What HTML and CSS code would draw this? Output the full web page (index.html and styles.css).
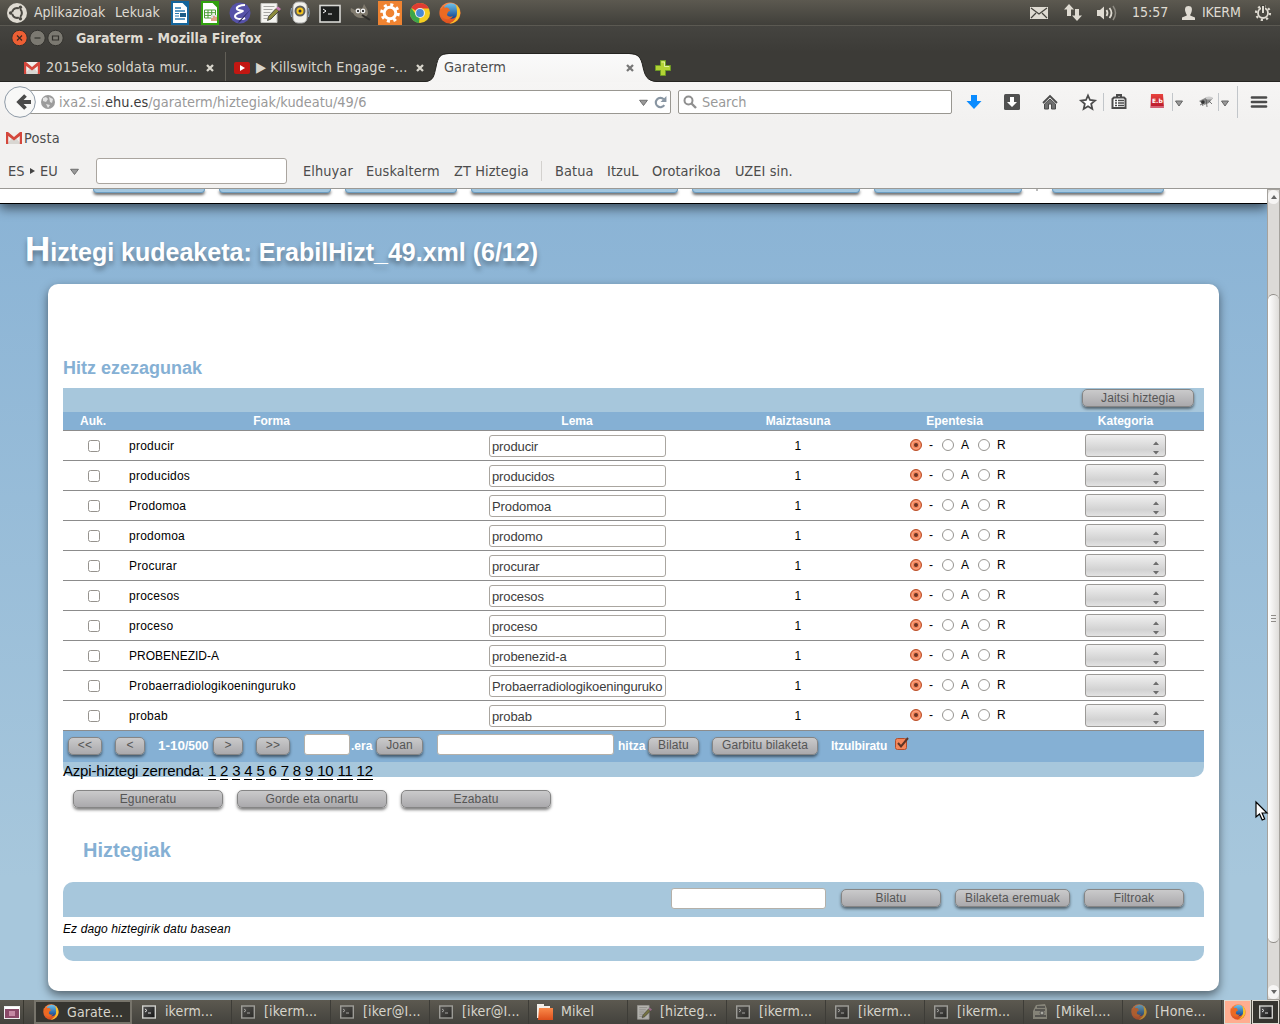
FILE: index.html
```html
<!DOCTYPE html>
<html lang="eu">
<head>
<meta charset="utf-8">
<title>Garaterm</title>
<link rel="stylesheet" href="styles.css">
</head>
<body>
<svg class="defs" width="0" height="0" aria-hidden="true">
  <defs>
    <linearGradient id="g-orange" x1="0" y1="0" x2="0" y2="1"><stop offset="0" stop-color="#fa8a4a"/><stop offset="1" stop-color="#dd4f1c"/></linearGradient>
    <linearGradient id="g-blue" x1="0" y1="0" x2="0" y2="1"><stop offset="0" stop-color="#6ec3ec"/><stop offset="1" stop-color="#12418c"/></linearGradient>
    <linearGradient id="g-term" x1="0" y1="0" x2="1" y2="1"><stop offset="0" stop-color="#555"/><stop offset="1" stop-color="#111"/></linearGradient>
    <linearGradient id="g-red" x1="0" y1="0" x2="0" y2="1"><stop offset="0" stop-color="#e8443e"/><stop offset="1" stop-color="#b5152b"/></linearGradient>
    <linearGradient id="g-tab" x1="0" y1="0" x2="0" y2="1"><stop offset="0" stop-color="#fafafa"/><stop offset="1" stop-color="#f5f4f3"/></linearGradient>
    <symbol id="firefox" viewBox="0 0 22 22"><circle cx="11" cy="11" r="10.6" fill="url(#g-orange)"/><circle cx="12" cy="9" r="7.8" fill="url(#g-blue)"/><path d="M17 2.500c4 3 5.500 9 3 13-2 4-6 6-9.500 6 7-3 9-8 6.500-19z" fill="#f8c32c"/><path d="M1 6l2 1 1-3 2 2c2-1 4 0 4 1.500 2 .5 1 2-1 2.200 0 1.300-1 1.800-1 3 1 2.300 4 2.300 6 1.300-2 3.500-6 4-8.500 2.500C2 16 .5 11 1 6z" fill="#ec6a22"/></symbol>
    <symbol id="term" viewBox="0 0 16 16"><rect x="1.700" y="2" width="12.600" height="12" fill="url(#g-term)" stroke="#d0d0cc" stroke-width="1.400"/><path d="M4 5l2 1.500L4 8M7 9h3" stroke="#ddd" fill="none"/></symbol>
    <symbol id="gmail" viewBox="0 0 16 12"><path d="M1 0h14v12H1z" fill="#f0efec"/><path d="M1 12l5-6 2 1.500L10 6l5 6z" fill="#d8d6d2"/><path d="M0 12V0h2l6 5 6-5h2v12h-2.200V4L8 8.500 2.200 4v8z" fill="#d4473c"/></symbol>
    <symbol id="close" viewBox="0 0 8 8"><path d="M1 1l6 6M7 1L1 7" stroke="currentColor" stroke-width="2.300"/></symbol>
    <symbol id="down" viewBox="0 0 8 6"><path d="M.5 1h7L4 5.700z" fill="#999" stroke="#666" stroke-width=".8"/></symbol>
    <symbol id="notes" viewBox="0 0 22 22"><path d="M2 2h16v19H2z" fill="#f4f4f0" stroke="#c4c4c0"/><path d="M4.500 5h11M4.500 8h9M4.500 11h7M4.500 14h5M4.500 17h4" stroke="#a5a5a2"/><path d="M17 7l3 2.500-8 8-3.500 1.500 1-4z" fill="#8b8a3c" stroke="#333" stroke-width=".8"/><path d="M17 7l2-2 3 2.500-2 2z" fill="#c77bb0"/></symbol>
    <symbol id="radio-on" viewBox="0 0 12 12"><circle cx="6" cy="6" r="5.500" fill="#f38459" stroke="#b9502b"/><circle cx="6" cy="6" r="3.900" fill="none" stroke="#f9a583"/><circle cx="6" cy="6" r="2" fill="#6b3323"/></symbol>
    <symbol id="radio-off" viewBox="0 0 12 12"><circle cx="6" cy="6" r="5.500" fill="#fff" stroke="#969490"/></symbol>
    <symbol id="updown" viewBox="0 0 8 14"><path d="M1 4l3-3.500L7 4zM1 10h6l-3 3.500z" fill="#6e6e6e"/></symbol>
  </defs>
</svg>

<header class="panel">
  <svg class="ubuntu" viewBox="0 0 20 20"><circle cx="10" cy="10" r="10" fill="#dfdbd2"/><circle cx="10" cy="10" r="4.800" fill="none" stroke="#4a4842" stroke-width="2.200"/><path d="M10 10L3 10M10 10l3.800-6.500M10 10l3.800 6.500" stroke="#dfdbd2" stroke-width="1.300"/><circle cx="10" cy="10" r="3.400" fill="#dfdbd2"/><circle cx="3.600" cy="10" r="1.700" fill="#4a4842"/><circle cx="13.400" cy="4.300" r="1.700" fill="#4a4842"/><circle cx="13.400" cy="15.700" r="1.700" fill="#4a4842"/></svg>
  <span class="menu-apps">Aplikazioak</span><span class="menu-places">Lekuak</span>
  <div class="launchers">
    <svg viewBox="0 0 24 24"><path d="M4 1h11l5 5v17H4z" fill="#fff" stroke="#14659c" stroke-width="2"/><path d="M14 0h7v7z" fill="#14659c"/><path d="M7 7h6M7 10h10M7 18h10" stroke="#2a7ab0" stroke-width="1.500"/><path d="M7 12.500h4M7 15h4" stroke="#2a7ab0"/><path d="M12 12h6v4h-6z" fill="#1c5c88"/></svg>
    <svg viewBox="0 0 24 24"><path d="M4 1h11l5 5v17H4z" fill="#fff" stroke="#31a00f" stroke-width="2"/><path d="M14 0h7v7z" fill="#31a00f"/><path d="M6.500 9h11v8h-11zM6.500 11.700h11M6.500 14.400h11M10 9v8M13.700 9v8" fill="none" stroke="#4a9c35"/><path d="M13 14h6v6h-6z" fill="#ddd"/><path d="M14 20v-3M16 20v-5M18 20v-4" stroke="#df6930"/></svg>
    <svg viewBox="0 0 24 24"><circle cx="12" cy="12" r="10.500" fill="#5652a8"/><path d="M17 4c-5 0-9 2-8 4s6 1 6 2-8 2-8 5 6 4 10 2" fill="none" stroke="#fff" stroke-width="2"/><path d="M23 8L12 21l-2 1 1-2z" fill="#29265b"/></svg>
    <svg viewBox="-1 0 24 24"><use href="#notes" width="22" height="23"/></svg>
    <svg viewBox="0 0 24 24"><rect x="5" y="1" width="14" height="21" rx="5" fill="#f1f1ed" stroke="#aaa"/><circle cx="12" cy="10" r="5.500" fill="#5c5e5d"/><circle cx="12" cy="10" r="3.500" fill="#f4c41d"/><circle cx="12" cy="10" r="1.500" fill="#333"/><path d="M3.500 7q-1.500 5 0 9M20.500 7q1.500 5 0 9" fill="none" stroke="#8ea9c7"/></svg>
    <svg viewBox="0 0 24 24"><rect x="2" y="4.500" width="20" height="16.500" fill="#1d1f1e" stroke="#d8d8d4" stroke-width="1.600"/><path d="M5 8l3 2-3 2M10 13h4" stroke="#fff" fill="none"/></svg>
    <svg viewBox="0 0 24 24"><path d="M3 7l4 2q3-4 7-1l2-5 3 5c2 4 1 8-5 9-4 0-7-1-9-5-2 0-3-3-2-5z" fill="#817b6e"/><circle cx="10" cy="10" r="2.400" fill="#eee"/><circle cx="15" cy="10" r="2.400" fill="#eee"/><circle cx="10" cy="10" r="1"/><circle cx="15" cy="10" r="1"/><path d="M14 14l8 5" stroke="#2e2d2a" stroke-width="2"/></svg>
    <svg viewBox="0 0 24 24"><path d="M0 0h24v24H0z" fill="#ef8331"/><circle cx="12" cy="12" r="5.800" fill="none" stroke="#fff" stroke-width="3"/><circle cx="12" cy="12" r="8.300" fill="none" stroke="#fff" stroke-width="3" stroke-dasharray="3 3.519"/></svg>
    <svg viewBox="0 0 24 24"><circle cx="12" cy="12" r="10" fill="#f4ce22"/><path d="M12 12L3.300 7A10 10 0 0 1 21 7.500H12z" fill="#df3c33"/><path d="M12 12L11 22A10 10 0 0 1 3.300 7l5 7z" fill="#3da64b"/><circle cx="12" cy="12" r="5" fill="#eee"/><circle cx="12" cy="12" r="3.900" fill="#4789d5"/></svg>
    <svg viewBox="-1 -1 24 24"><use href="#firefox" width="22" height="22"/></svg>
  </div>
  <div class="tray">
    <svg class="t-mail" viewBox="0 0 18 12"><path d="M0 0h18v12H0z" fill="#dfdbd2"/><path d="M1 1l8 6 8-6M1 11l5-5M17 11l-5-5" fill="none" stroke="#45443e" stroke-width="1.200"/></svg>
    <svg class="t-net" viewBox="0 0 18 17"><path d="M5 0l5 5.500H7V12H3V5.500H0zM13 17l5-5.500h-3V5h-4v6.500H8z" fill="#dfdbd2"/></svg>
    <svg class="t-vol" viewBox="0 0 20 16"><path d="M0 5h3l4-3.500v13L3 11H0z" fill="#dfdbd2"/><path d="M9.500 5q2 3 0 6M12.500 3q4 5 0 10" fill="none" stroke="#dfdbd2" stroke-width="1.800"/><path d="M16 1q5 7 0 14" fill="none" stroke="#8d8a82" stroke-width="1.500"/></svg>
    <span class="clock">15:57</span>
    <svg class="t-user" viewBox="0 0 13 14"><path d="M6.500 0C10 0 10.500 3 9.500 6 9 8 8 8.500 8.200 9.500L13 11.500V14H0v-2.500l4.800-2C5 8.500 4 8 3.500 6 2.500 3 3 0 6.500 0z" fill="#dfdbd2"/></svg>
    <span class="user">IKERM</span>
    <svg class="t-gear" viewBox="0 0 16 16"><circle cx="8" cy="8" r="5" fill="none" stroke="#dfdbd2" stroke-width="1.800"/><circle cx="8" cy="8" r="7" fill="none" stroke="#dfdbd2" stroke-width="2.200" stroke-dasharray="2.200 3.298"/><path d="M8 0v8" stroke="#45443e" stroke-width="4"/><path d="M8 1v7" stroke="#dfdbd2" stroke-width="2"/></svg>
  </div>
</header>

<div class="titlebar">
  <svg class="winbtns" viewBox="0 0 54 18"><circle cx="8.500" cy="9" r="7.700" fill="#ed5f34" stroke="#33322e"/><path d="M6 6.500l5 5M11 6.500l-5 5" stroke="#3d2a22" stroke-width="1.200"/><circle cx="26.500" cy="9" r="7.700" fill="#7b7971" stroke="#33322e"/><path d="M23.500 9h6" stroke="#32312d" stroke-width="1.200"/><circle cx="44.500" cy="9" r="7.700" fill="#7b7971" stroke="#33322e"/><path d="M41.500 7h6v4h-6z" fill="none" stroke="#32312d" stroke-width="1.200"/></svg>
  <b>Garaterm - Mozilla Firefox</b>
</div>

<nav class="tabs">
  <div class="tab"><svg class="fav gm"><use href="#gmail"/></svg><span>2015eko soldata mur...</span><svg class="x"><use href="#close"/></svg></div>
  <div class="tab second"><svg class="fav" viewBox="0 0 16 12"><rect width="16" height="12" rx="2" fill="#c31712"/><path d="M6 3l5 3-5 3z" fill="#fff"/></svg><span>▶ Killswitch Engage -...</span><svg class="x"><use href="#close"/></svg></div>
  <div class="tab active"><svg class="shape" viewBox="0 0 232 29"><path d="M0 29C9 28 9 22 11 14 13 4 15 1 24 1H204C213 1 216 4 218 14 220 23 222 28 232 29z" fill="url(#g-tab)"/><path d="M0 28.500C9 28 9 22 11 14 13 4 15 .5 24 .5H204C213 .5 216 4 218 14 220 23 222 28 232 28.500" fill="none" stroke="#252421"/></svg><span>Garaterm</span><svg class="x"><use href="#close"/></svg></div>
  <svg class="plus" viewBox="0 0 16 16"><path d="M5.500.5h5v5h5v5h-5v5h-5v-5h-5v-5h5z" fill="#b3d335" stroke="#6e9a24"/><path d="M6.500 2h3v4.500H14" fill="none" stroke="#e3f1a0"/></svg>
</nav>

<div class="navbar">
  <svg class="back" viewBox="0 0 32 32"><circle cx="16" cy="16" r="15.300" fill="#f8f8f7" stroke="#8e9aa7"/><path d="M27 16H15M21.500 9.500L15 16l6.500 6.500" fill="none" stroke="#4a4a4a" stroke-width="3.800"/></svg>
  <div class="urlbar">
    <svg class="globe" viewBox="0 0 14 14"><circle cx="7" cy="7" r="7" fill="#9c9c9c"/><path d="M2 3l3-1 2 2-2 3-3-1zM8 2l4 2-1 4-2-1zM5 9l4 1-2 3z" fill="#e4e4e4"/></svg>
    <span class="url">ixa2.si.<em>ehu.es</em>/garaterm/hiztegiak/kudeatu/49/6</span>
    <svg class="dd"><use href="#down"/></svg>
    <svg class="reload" viewBox="0 0 12 12"><path d="M9.500 8.500a4.300 4.300 0 1 1-.5-5.500" fill="none" stroke="#8895a2" stroke-width="2"/><path d="M11.500 0v5.500H6z" fill="#8895a2"/></svg>
  </div>
  <div class="search"><svg viewBox="0 0 14 14"><circle cx="5.500" cy="5.500" r="4" fill="none" stroke="#8f8f8f" stroke-width="2"/><path d="M8.500 8.500l4.500 4.500" stroke="#8f8f8f" stroke-width="2.400"/></svg><span>Search</span></div>
  <svg class="tools" viewBox="960 82 320 40">
    <path d="M971 95h6v6h4.500l-7.500 8-7.500-8h4.500z" fill="#0a8bff"/>
    <rect x="1004" y="94" width="16" height="16" rx="1.500" fill="#505050"/><path d="M1010 97h4v5h3l-5 5-5-5h3z" fill="#fff"/>
    <path d="M1043 103l7-7 7 7" fill="none" stroke="#4b4b4b" stroke-width="1.800"/><path d="M1050 99l5.500 5v5h-4v-5h-3v5h-4v-5z" fill="#707070" stroke="#4b4b4b"/>
    <path d="M1088 95.500l2 4.500 5 .6-3.800 3.300 1.100 5-4.300-2.600-4.300 2.600 1.100-5-3.800-3.300 5-.6z" fill="#fff" stroke="#4b4b4b" stroke-width="1.800"/>
    <path d="M1103.500 93v18M1172.500 93v18M1218.500 93v18M1237.500 86v32" stroke="#c2c6ca"/>
    <path d="M1114 97.500h10l1.500 1.500v9h-13v-9zM1117 97v-2h4v2" fill="#fff" stroke="#4b4b4b" stroke-width="2"/><path d="M1115 100.500h2M1118 100.500h6M1115 103h2M1118 103h6M1115 105.500h2M1118 105.500h6" stroke="#4b4b4b" stroke-width="1.300"/>
    <path d="M1151 94h12l1 14h-13.500z" fill="url(#g-red)"/><path d="M1151 107h13" stroke="#eab"/><text x="1152" y="103" class="eb">E.b</text>
    <path d="M1175.500 101h7l-3.500 5zM1221.500 101h7l-3.500 5z" fill="#999" stroke="#666"/>
    <path d="M1199 101l8-4 6 1-4 5-5 2z" fill="#888"/><path d="M1201 101l2 5M1206 98l1 9M1209 101l3 3M1200 105l4-2" stroke="#555" stroke-width=".8"/><ellipse cx="1209" cy="98" rx="3.500" ry="1.500" fill="#ccc"/><circle cx="1203" cy="102" r="1.700" fill="#333"/>
    <path d="M1252 97.500h14M1252 102h14M1252 106.500h14" stroke="#4b4b4b" stroke-width="2.700" stroke-linecap="round"/>
  </svg>
</div>
<div class="bookmarks"><svg><use href="#gmail"/></svg><span>Posta</span></div>
<div class="dictbar">
  <span class="lang">ES</span><svg class="tri" viewBox="0 0 5 6"><path d="M0 0l5 3-5 3z" fill="#444"/></svg><span class="eu">EU</span>
  <svg class="dd"><use href="#down"/></svg><i class="dictinput"></i>
  <span class="d1">Elhuyar</span><span class="d2">Euskalterm</span><span class="d3">ZT Hiztegia</span><i class="vsep"></i><span class="d4">Batua</span><span class="d5">ItzuL</span><span class="d6">Orotarikoa</span><span class="d7">UZEI sin.</span>
</div>

<div class="viewport">
<main class="page">
  <div class="sitenav"><i class="w112"></i><i class="w112"></i><i class="w112"></i><i class="w207"></i><i class="w168"></i><i class="w148"></i><b class="dot"></b><i class="w112"></i></div>
  <h1>Hiztegi kudeaketa: ErabilHizt_49.xml (6/12)</h1>
  <section class="card">
    <h3>Hitz ezezagunak</h3>
    <div class="strip top"><button class="btn jaitsi">Jaitsi hiztegia</button></div>
    <div class="row head"><b>Auk.</b><b>Forma</b><b>Lema</b><b>Maiztasuna</b><b>Epentesia</b><b>Kategoria</b></div>
    <div class="row"><i class="cb"></i><span>producir</span><div class="lema">producir</div><span class="n">1</span><div class="ep"><svg><use href="#radio-on"/></svg><span>-</span><svg><use href="#radio-off"/></svg><span class="a">A</span><svg><use href="#radio-off"/></svg><span>R</span></div><div class="sel"><svg><use href="#updown"/></svg></div></div>
    <div class="row"><i class="cb"></i><span>producidos</span><div class="lema">producidos</div><span class="n">1</span><div class="ep"><svg><use href="#radio-on"/></svg><span>-</span><svg><use href="#radio-off"/></svg><span class="a">A</span><svg><use href="#radio-off"/></svg><span>R</span></div><div class="sel"><svg><use href="#updown"/></svg></div></div>
    <div class="row"><i class="cb"></i><span>Prodomoa</span><div class="lema">Prodomoa</div><span class="n">1</span><div class="ep"><svg><use href="#radio-on"/></svg><span>-</span><svg><use href="#radio-off"/></svg><span class="a">A</span><svg><use href="#radio-off"/></svg><span>R</span></div><div class="sel"><svg><use href="#updown"/></svg></div></div>
    <div class="row"><i class="cb"></i><span>prodomoa</span><div class="lema">prodomo</div><span class="n">1</span><div class="ep"><svg><use href="#radio-on"/></svg><span>-</span><svg><use href="#radio-off"/></svg><span class="a">A</span><svg><use href="#radio-off"/></svg><span>R</span></div><div class="sel"><svg><use href="#updown"/></svg></div></div>
    <div class="row"><i class="cb"></i><span>Procurar</span><div class="lema">procurar</div><span class="n">1</span><div class="ep"><svg><use href="#radio-on"/></svg><span>-</span><svg><use href="#radio-off"/></svg><span class="a">A</span><svg><use href="#radio-off"/></svg><span>R</span></div><div class="sel"><svg><use href="#updown"/></svg></div></div>
    <div class="row"><i class="cb"></i><span>procesos</span><div class="lema">procesos</div><span class="n">1</span><div class="ep"><svg><use href="#radio-on"/></svg><span>-</span><svg><use href="#radio-off"/></svg><span class="a">A</span><svg><use href="#radio-off"/></svg><span>R</span></div><div class="sel"><svg><use href="#updown"/></svg></div></div>
    <div class="row"><i class="cb"></i><span>proceso</span><div class="lema">proceso</div><span class="n">1</span><div class="ep"><svg><use href="#radio-on"/></svg><span>-</span><svg><use href="#radio-off"/></svg><span class="a">A</span><svg><use href="#radio-off"/></svg><span>R</span></div><div class="sel"><svg><use href="#updown"/></svg></div></div>
    <div class="row"><i class="cb"></i><span class="caps">PROBENEZID-A</span><div class="lema">probenezid-a</div><span class="n">1</span><div class="ep"><svg><use href="#radio-on"/></svg><span>-</span><svg><use href="#radio-off"/></svg><span class="a">A</span><svg><use href="#radio-off"/></svg><span>R</span></div><div class="sel"><svg><use href="#updown"/></svg></div></div>
    <div class="row"><i class="cb"></i><span>Probaerradiologikoeninguruko</span><div class="lema">Probaerradiologikoeninguruko</div><span class="n">1</span><div class="ep"><svg><use href="#radio-on"/></svg><span>-</span><svg><use href="#radio-off"/></svg><span class="a">A</span><svg><use href="#radio-off"/></svg><span>R</span></div><div class="sel"><svg><use href="#updown"/></svg></div></div>
    <div class="row"><i class="cb"></i><span>probab</span><div class="lema">probab</div><span class="n">1</span><div class="ep"><svg><use href="#radio-on"/></svg><span>-</span><svg><use href="#radio-off"/></svg><span class="a">A</span><svg><use href="#radio-off"/></svg><span>R</span></div><div class="sel"><svg><use href="#updown"/></svg></div></div>
    <div class="pager">
      <button class="btn first">&lt;&lt;</button><button class="btn prev">&lt;</button><b class="range"><big>1-10</big>/500</b><button class="btn next">&gt;</button><button class="btn lastpage">&gt;&gt;</button>
      <i class="inp goto"></i><b class="era">.era</b><button class="btn joan">Joan</button><i class="inp word"></i><b class="hitza">hitza</b><button class="btn bil">Bilatu</button><button class="btn garb">Garbitu bilaketa</button><b class="itz">Itzulbiratu</b>
      <svg class="checked" viewBox="0 0 14 14"><rect x=".5" y="1.500" width="11" height="11" rx="2" fill="#f4875b" stroke="#b24d2a"/><path d="M3 6l3 3.500L13 1" fill="none" stroke="#5d3527" stroke-width="2"/></svg>
    </div>
    <div class="strip sublist">Azpi-hiztegi zerrenda: <u>1</u> <u>2</u> <u>3</u> <u>4</u> <u>5</u> 6 <u>7</u> <u>8</u> <u>9</u> <u>10</u> <u>11</u> <u>12</u></div>
    <div class="actions"><button class="btn">Eguneratu</button><button class="btn">Gorde eta onartu</button><button class="btn">Ezabatu</button></div>
    <h2>Hiztegiak</h2>
    <div class="filter"><i class="inp"></i><button class="btn">Bilatu</button><button class="btn wide">Bilaketa eremuak</button><button class="btn">Filtroak</button></div>
    <p class="none">Ez dago hiztegirik datu basean</p>
    <div class="strip end"></div>
  </section>
</main>
<aside class="scrollbar"><i class="up"></i><i class="thumb"></i><i class="dn"></i></aside>
</div>

<footer class="taskbar">
  <div class="desk"><svg viewBox="0 0 16 13"><rect x=".5" y=".5" width="15" height="12" fill="#8a4a68" stroke="#eee"/><path d="M1 2h14" stroke="#fff" stroke-width="2"/><path d="M5 5h6v5H5z" fill="#c58aa4"/></svg></div>
  <div class="task on"><svg><use href="#firefox"/></svg>Garate...</div>
  <div class="task live"><svg><use href="#term"/></svg>ikerm...</div>
  <div class="task"><svg><use href="#term"/></svg>[ikerm...</div>
  <div class="task"><svg><use href="#term"/></svg>[iker@I...</div>
  <div class="task"><svg><use href="#term"/></svg>[iker@I...</div>
  <div class="task live"><svg viewBox="0 0 16 16"><path d="M0 0h7v2h6v12H0z" fill="#f4efe8"/><path d="M2 4h14v12H1z" fill="url(#g-orange)"/></svg>Mikel</div>
  <div class="task"><svg><use href="#notes"/></svg>[hizteg...</div>
  <div class="task"><svg><use href="#term"/></svg>[ikerm...</div>
  <div class="task"><svg><use href="#term"/></svg>[ikerm...</div>
  <div class="task"><svg><use href="#term"/></svg>[ikerm...</div>
  <div class="task"><svg viewBox="0 0 16 16"><path d="M4 1l9-1 2 5v10H1V7z" fill="#a9a799"/><path d="M5 3h8M3 6h10M3 12h11" stroke="#444" stroke-width="1.500"/><circle cx="10" cy="9" r="2" fill="#e8e8e0" stroke="#555"/></svg>[Mikel....</div>
  <div class="task"><svg><use href="#firefox"/></svg>[Hone...</div>
  <div class="ws cur"><svg><use href="#firefox"/></svg></div><div class="ws"><svg><use href="#term"/></svg></div>
</footer>
<svg class="cursor" viewBox="0 0 13 20"><path d="M1 1v15l3.500-3 2.700 6 2.500-1-2.600-6H12z" fill="#fff" stroke="#000" stroke-width="1.200"/></svg>
</body>
</html>
```
FILE: styles.css
```css
* { box-sizing: border-box; }
body { margin: 0; width: 1280px; height: 1024px; overflow: hidden; display: flex; flex-direction: column; font: 14.4px "DejaVu Sans Condensed", "DejaVu Sans", sans-serif; font-stretch: condensed; color: #4c4c4c; white-space: nowrap; position: relative; }
svg { display: block; flex: none; overflow: visible; }
i, button { flex: none; }
.defs { position: absolute; }

.panel { height: 25px; flex: none; display: flex; align-items: center; padding-left: 7px; background: linear-gradient(#5c5950, #403f3a); color: #dfdbd2; font-size: 14px; }
.panel span { line-height: 22px; margin-top: -2px; }
.ubuntu { width: 20px; height: 20px; }
.menu-apps { margin-left: 7px; width: 81px; }
.menu-places { width: 53px; letter-spacing: .1px; }
.launchers { display: flex; gap: 6px; }
.launchers svg { width: 24px; height: 24px; }
.tray { margin-left: auto; display: flex; align-items: center; padding-right: 9px; }
.t-mail { width: 18px; height: 12px; margin-right: 16px; }
.t-net { width: 18px; height: 17px; margin-right: 15px; }
.t-vol { width: 20px; height: 16px; margin-right: 15px; }
.clock { width: 50px; }
.t-user { width: 13px; height: 14px; margin-right: 7px; }
.user { width: 53px; letter-spacing: -.2px; }
.t-gear { width: 16px; height: 16px; }

.titlebar { height: 27px; flex: none; border-top: 1px solid #5b5952; background: linear-gradient(#454440, #3c3b37); display: flex; align-items: center; padding: 0 0 2px 11px; color: #dfdbd2; }
.winbtns { width: 54px; height: 18px; margin-right: 11px; }
.titlebar b { font-size: 14px; line-height: 24px; }

.tabs { height: 30px; flex: none; display: flex; align-items: center; background: #3c3b37; border-bottom: 1px solid #252421; padding-left: 24px; color: #d8d5cc; }
.tab { display: flex; align-items: center; height: 29px; width: 201px; position: relative; }
.tab span { width: 160px; line-height: 26px; letter-spacing: .12px; }
.fav { width: 16px; height: 12px; margin-right: 6px; margin-top: 2px; }
.x { width: 8px; height: 8px; margin-top: 2px; }
.tab.second { border-left: 1px solid #625f57; width: 204px; padding-left: 8px; }
.tab.active { width: 227px; padding-left: 15px; color: #4c4c4c; }
.tab.active span { width: 182px; z-index: 1; letter-spacing: 0; }
.tab.active .x { z-index: 1; color: #777; }
.shape { position: absolute; left: -4px; top: 1px; width: 232px; height: 29px; }
.plus { width: 16px; height: 16px; margin-top: 2px; margin-left: -1px; }

.navbar { height: 40px; flex: none; display: flex; align-items: center; padding-left: 4px; background: linear-gradient(#f6f5f4, #f2f1f0); }
.back { width: 32px; height: 32px; z-index: 1; }
.urlbar { width: 642px; height: 24px; margin-left: -7px; border: 1px solid #999791; border-radius: 2px; background: #fff; display: flex; align-items: center; padding-left: 11px; color: #999; }
.globe { width: 14px; height: 14px; margin-right: 4px; }
.url { width: 580px; }
.url em { font-style: normal; color: #3c3c3c; }
.dd { width: 9px; height: 7px; }
.reload { width: 13px; height: 13px; margin-left: 6px; }
.search { width: 274px; height: 24px; margin-left: 7px; border: 1px solid #999791; border-radius: 2px; background: #fff; display: flex; align-items: center; padding-left: 4px; gap: 5px; color: #999; }
.search svg { width: 14px; height: 14px; }
.tools { width: 320px; height: 40px; margin-left: 8px; }
.eb { font: bold 6px "DejaVu Sans", sans-serif; fill: #fff; }
.bookmarks { height: 32px; flex: none; background: #f2f1f0; display: flex; align-items: center; padding-left: 6px; gap: 2px; letter-spacing: .2px; }
.bookmarks svg { width: 16px; height: 12px; }
.dictbar { height: 35px; flex: none; background: #f2f1f0; border-bottom: 1px solid #9b9995; display: flex; align-items: center; padding-left: 8px; letter-spacing: .1px; }
.lang { width: 22px; }
.tri { width: 5px; height: 6px; }
.eu { margin-left: 5px; width: 30px; }
.dictinput { width: 191px; height: 26px; margin: 0 16px 0 17px; border: 1px solid #aaa59f; border-radius: 3px; background: #fff; }
.d1 { width: 63px; } .d2 { width: 88px; } .d3 { width: 87px; }
.vsep { width: 1px; height: 20px; background: #d3d1ce; margin-right: 13px; }
.d4 { width: 52px; } .d5 { width: 45px; } .d6 { width: 83px; }

.viewport { height: 811px; flex: none; display: flex; font: 12px "Liberation Sans", Arial, sans-serif; color: #000; }
.page { width: 1267px; height: 811px; overflow: hidden; background: linear-gradient(#8ab3d5, #a7c7dc 85%); }
.sitenav { height: 15px; background: #fff; border-bottom: 1px solid #000; box-shadow: 0 4px 12px rgba(0,0,0,.6); display: flex; gap: 14px; padding-left: 93px; }
.sitenav i { height: 4px; background: #a2c6df; border: solid #6c9dc1; border-width: 0 1px 1px; border-radius: 0 0 5px 5px; box-shadow: 0 2px 3px rgba(0,0,0,.6); }
.w112 { width: 112px; } .w207 { width: 207px; } .w168 { width: 168px; } .w148 { width: 148px; }
.dot { width: 2px; height: 2px; background: #bbb; }
h1 { margin: 24px 0 0 25px; height: 56px; font-size: 25px; line-height: 42px; color: #fff; text-shadow: 0 4px 5px rgba(0,0,0,.35); }
h1::first-letter { font-size: 35px; }
.card { margin-left: 48px; width: 1171px; height: 707px; padding: 73px 15px 0; background: #fff; border-radius: 10px; box-shadow: 0 4px 10px rgba(0,0,0,.5); }
h3 { margin: 0; height: 31px; font-size: 18px; line-height: 22px; color: #85b0d4; }
.strip { background: #a7c7dc; }
.top { height: 24px; padding: 1px 10px 0 0; display: flex; justify-content: flex-end; }
.btn { height: 18px; padding: 0; border: 1px solid #858585; border-radius: 5px; background: linear-gradient(#cacacb, #aaa9ac); box-shadow: 0 2px 3px rgba(0,0,0,.5); color: #555; font: 12px/15px "Liberation Sans", Arial, sans-serif; letter-spacing: .13px; }
.jaitsi { width: 112px; }
.row { height: 30px; border-bottom: 1px solid #8c8c8c; display: grid; grid-template-columns: 60px 297px 314px 128px 185px 157px; align-items: center; }
.row.head { height: 19px; background: #85b0d4; color: #fff; text-align: center; line-height: 18px; }
.row > span { padding-left: 6px; letter-spacing: .24px; }
.row > .caps { letter-spacing: 0; }
.row > .n { padding: 0; text-align: center; }
.cb { width: 12px; height: 12px; border: 1px solid #96938e; border-radius: 2.500px; margin: 1px 0 0 25px; }
.lema { width: 177px; height: 22px; margin: 1px 0 0 69px; border: 1px solid #aaa6a0; border-radius: 3px; padding-left: 2px; font-size: 13px; letter-spacing: -.11px; line-height: 22px; color: #3c3c3c; }
.ep { display: flex; align-items: center; padding-left: 48px; margin-top: -1px; }
.ep svg { width: 12px; height: 12px; }
.ep span { width: 20px; padding-left: 7px; }
.ep .a { width: 24px; }
.sel { width: 81px; height: 23px; margin-left: 38px; border: 1px solid #9c9a97; border-radius: 3px; background: linear-gradient(#f0f0f0, #d2d2d2 70%, #e2e2e2); display: flex; justify-content: flex-end; padding: 6px 5px 0 0; }
.sel svg { width: 8px; height: 14px; }
.pager { height: 31px; background: #85b0d4; display: flex; align-items: center; padding: 0 0 2px 5px; color: #fff; }
.inp { border: 1px solid #b4b0a9; border-radius: 3px; background: #fff; height: 21px; }
.pager .inp { margin-top: -2px; }
.first { width: 34px; margin-right: 13px; }
.prev { width: 30px; margin-right: 13px; }
.range { width: 55px; }
.range big { font-size: 13.500px; }
.next { width: 30px; margin-right: 13px; }
.lastpage { width: 34px; margin-right: 14px; }
.goto { width: 46px; margin-right: 1px; }
.era { width: 25px; }
.joan { width: 47px; margin-right: 14px; }
.word { width: 177px; margin-right: 4px; }
.hitza { width: 30px; }
.bil { width: 51px; margin-right: 13px; }
.garb { width: 106px; margin-right: 13px; }
.itz { width: 64px; letter-spacing: -.1px; }
.checked { width: 14px; height: 14px; margin-top: -4px; }
.sublist { height: 15px; border-radius: 0 0 10px 10px; font-size: 15px; line-height: 18px; letter-spacing: -.19px; margin-bottom: 13px; }
.sublist u { text-decoration: none; border-bottom: 1px solid #000; }
.actions { display: flex; gap: 14px; padding-left: 10px; }
.actions .btn { width: 150px; }
h2 { margin: 30px 0 0 20px; height: 44px; font-size: 20px; line-height: 24px; color: #85b0d4; }
.filter { height: 35px; background: #a7c7dc; border-radius: 10px 10px 0 0; display: flex; align-items: center; padding: 0 20px 3px 608px; gap: 14px; }
.filter .inp { width: 155px; margin-right: 1px; }
.filter .btn { width: 100px; }
.filter .wide { width: 115px; }
.none { margin: 0; height: 29px; line-height: 24px; font-style: italic; letter-spacing: .12px; }
.end { height: 15px; border-radius: 0 0 10px 10px; }

.scrollbar { width: 13px; display: flex; flex-direction: column; background: #dcdad7; border: 1px solid #a5a29d; }
.up, .dn { height: 14px; background: #f6f5f4; border-radius: 6px; display: flex; justify-content: center; align-items: center; }
.up::after, .dn::after { content: ""; border: solid transparent; border-width: 0 3px 4px; border-bottom-color: #666; }
.dn { margin-top: auto; }
.dn::after { transform: rotate(180deg); }
.thumb { height: 649px; margin-top: 90px; border: solid #908d88; border-width: 1px 0; border-radius: 6px; background: repeating-linear-gradient(#8f8c88 0 1px, transparent 1px 3px) center/5px 7px no-repeat, linear-gradient(90deg, #fff, #dedcd9); }

.taskbar { height: 24px; flex: none; display: flex; background: linear-gradient(#5c5950, #43423d); color: #d8d5cc; font-size: 14px; line-height: 22px; letter-spacing: .12px; }
.desk { width: 24px; margin-right: 10px; border-right: 1px solid #37362f; padding: 6px 0 0 4px; }
.desk svg { width: 16px; height: 13px; }
.task { width: 99px; flex: none; display: flex; align-items: center; gap: 8px; padding: 0 0 2px 8px; border-right: 1px solid #3d3c37; }
.task svg { width: 16px; height: 16px; opacity: .6; margin-top: 1px; }
.task.on svg, .task.live svg { opacity: 1; }
.task.on { background: #363530; border: 2px solid #77746b; padding: 0 0 1px 7px; width: 98px; margin-right: 1px; }
.ws { width: 27px; border: 1px solid #dfdbd2; background: #35342f; display: flex; align-items: center; justify-content: center; margin-left: 1px; }
.ws.cur { background: #ffad90; margin-left: 2px; }
.ws svg { width: 16px; height: 16px; }
.cursor { position: absolute; left: 1255px; top: 801px; width: 13px; height: 20px; }
```
